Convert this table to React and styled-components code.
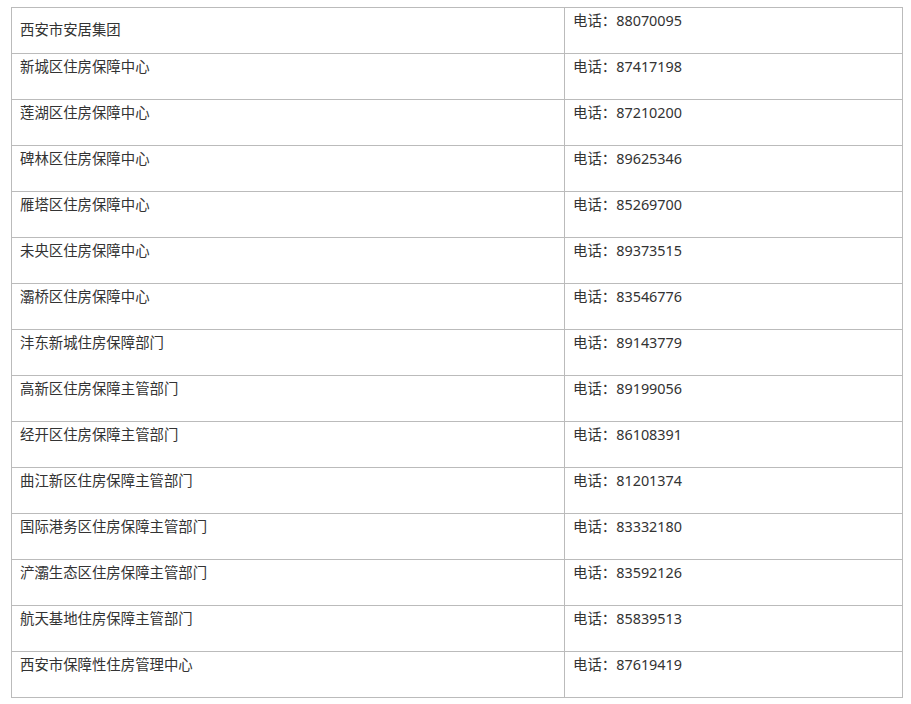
import React from 'react';
import styled, { createGlobalStyle } from 'styled-components';

const GlobalStyle = createGlobalStyle`
  body {
    margin: 0;
    background: #ffffff;
    font-family: "Noto Sans", "Noto Sans CJK SC", sans-serif;
    color: #333333;
  }
`;

const Page = styled.div`
  padding: 7px 0 0 11px;
`;

const Table = styled.table`
  width: 891px;
  border-collapse: collapse;
  table-layout: fixed;
  font-size: 14.4px;
`;

const Row = styled.tr`
  height: 46px;
`;

const Cell = styled.td`
  border: 1px solid #bbbbbb;
  padding: 2px 8px 4px;
  line-height: 22px;
  vertical-align: ${(p) => (p.$middle ? 'middle' : 'top')};
  color: #333333;
`;

const offices = [
  ['西安市安居集团', '88070095'],
  ['新城区住房保障中心', '87417198'],
  ['莲湖区住房保障中心', '87210200'],
  ['碑林区住房保障中心', '89625346'],
  ['雁塔区住房保障中心', '85269700'],
  ['未央区住房保障中心', '89373515'],
  ['灞桥区住房保障中心', '83546776'],
  ['沣东新城住房保障部门', '89143779'],
  ['高新区住房保障主管部门', '89199056'],
  ['经开区住房保障主管部门', '86108391'],
  ['曲江新区住房保障主管部门', '81201374'],
  ['国际港务区住房保障主管部门', '83332180'],
  ['浐灞生态区住房保障主管部门', '83592126'],
  ['航天基地住房保障主管部门', '85839513'],
  ['西安市保障性住房管理中心', '87619419'],
];

export default function App() {
  return (
    <>
      <GlobalStyle />
      <Page>
        <Table>
          <colgroup>
            <col style={{ width: '553px' }} />
            <col style={{ width: '338px' }} />
          </colgroup>
          <tbody>
            {offices.map(([name, phone], i) => (
              <Row key={name}>
                <Cell $middle={i === 0}>{name}</Cell>
                <Cell>电话：{phone}</Cell>
              </Row>
            ))}
          </tbody>
        </Table>
      </Page>
    </>
  );
}
